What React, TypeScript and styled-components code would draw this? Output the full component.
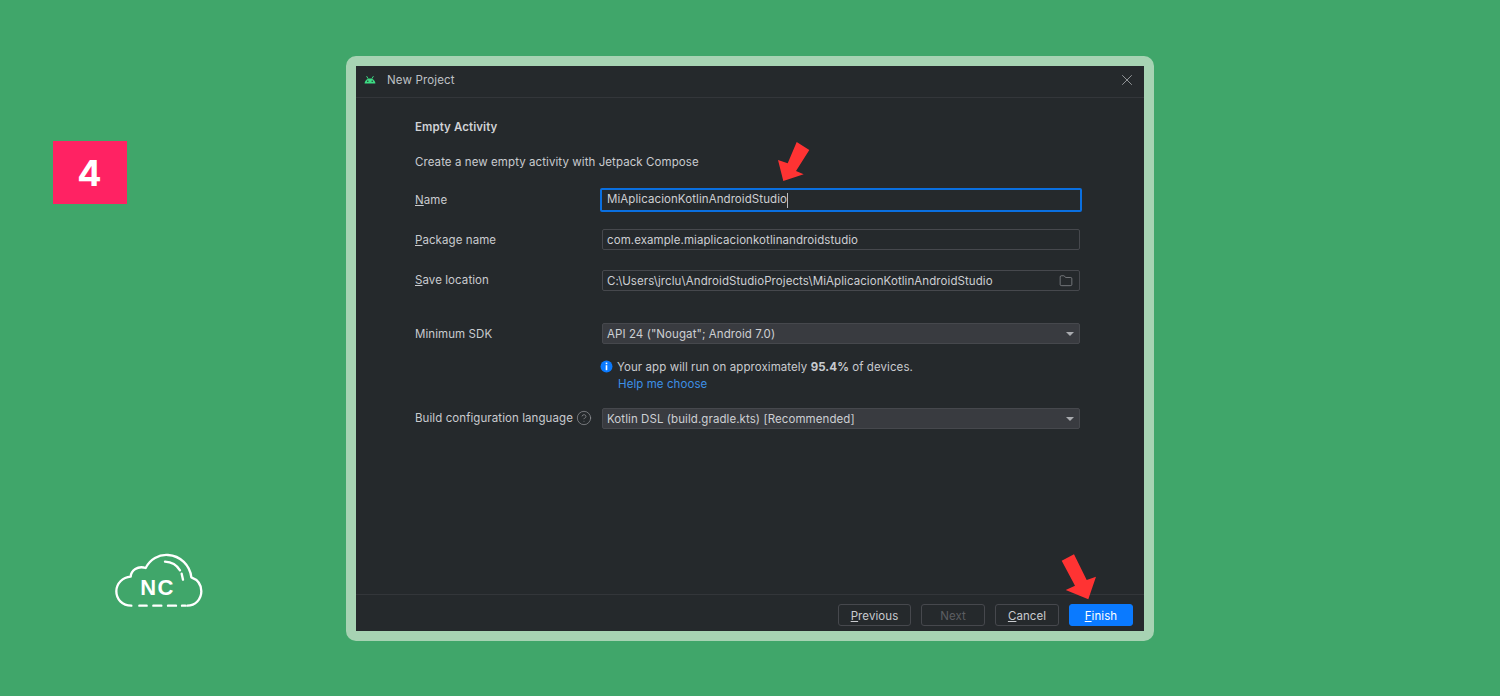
import React from 'react';
import styled, { createGlobalStyle } from 'styled-components';
import { CircleHelp, Folder, X } from 'lucide-react';

const GlobalStyle = createGlobalStyle`
  html, body {
    margin: 0;
    padding: 0;
    height: 100%;
    overflow: hidden;
  }
  body {
    background: #40a66a;
    font-family: Inter, "Liberation Sans", sans-serif;
  }
`;

const Page = styled.div`
  display: flex;
  width: 1500px;
  height: 696px;
  background: #40a66a;
`;

const Aside = styled.aside`
  display: flex;
  flex-direction: column;
  width: 346px;
  padding: 141px 0 0 53px;
  box-sizing: border-box;
`;

const StepBadge = styled.div`
  display: flex;
  align-items: center;
  justify-content: center;
  width: 74px;
  height: 63px;
  padding-right: 1px;
  box-sizing: border-box;
  background: #ff2263;
  color: #fff;
  font-family: Inter, "Liberation Sans", sans-serif;
  font-size: 36px;
  font-weight: 700;
`;

const LogoWrap = styled.div`
  margin: 336px 0 0 47px;
  width: 115px;
  height: 75px;
`;

const LogoText = styled.text`
  font-family: "Liberation Sans", sans-serif;
  font-size: 66px;
  font-weight: 700;
  letter-spacing: 4px;
  fill: #fff;
`;

const Frame = styled.div`
  position: relative;
  margin-top: 56px;
  width: 808px;
  height: 585px;
  box-sizing: border-box;
  border: 10px solid #a7d3b3;
  border-radius: 10px;
  background: #25292c;
  overflow: hidden;
`;

const Dialog = styled.div`
  display: flex;
  flex-direction: column;
  height: 100%;
`;

const TitleBar = styled.header`
  display: flex;
  align-items: center;
  box-sizing: border-box;
  height: 32px;
  padding: 0 8px 4px 8px;
  border-bottom: 1px solid #33363a;
  color: #bfc1c5;
  font-size: 11.5px;
  letter-spacing: 0.15px;
`;

const TitleText = styled.span`
  margin-left: 11px;
  flex: 1;
`;

const CloseButton = styled.span`
  display: flex;
  color: #a9abaf;
`;

const Body = styled.div`
  flex: 1;
  padding: 22px 63px 0 59px;
  color: #c9cbcf;
  font-size: 11.5px;
  letter-spacing: 0.08px;
`;

const Heading = styled.div`
  height: 15px;
  line-height: 15px;
  font-weight: 600;
  color: #d0d2d6;
`;

const Description = styled.div`
  height: 15px;
  line-height: 15px;
  margin: 20px 0 18px;
`;

const Row = styled.div<{ $gap: number }>`
  display: grid;
  grid-template-columns: 186px 480px;
  align-items: center;
  margin-top: ${p => p.$gap}px;
`;

const Label = styled.label<{ $lift?: boolean }>`
  display: flex;
  align-items: center;
  gap: 3px;
  white-space: nowrap;
  padding-bottom: ${p => (p.$lift ? 2 : 0)}px;
`;

const Field = styled.div<{ $focused?: boolean; $select?: boolean }>`
  display: flex;
  align-items: center;
  justify-content: space-between;
  box-sizing: border-box;
  height: ${p => (p.$focused ? 24 : 21)}px;
  margin: ${p => (p.$focused ? '0 -1px' : '0 1px')};
  padding: 0 ${p => (p.$select ? 5 : 6)}px 0 ${p => (p.$focused ? 5 : 4)}px;
  border: ${p => (p.$focused ? '2px solid #0a6fe0' : '1px solid #46484d')};
  border-radius: 2px;
  background: ${p => (p.$select ? '#393b40' : '#25292c')};
  color: #cdcfd3;
`;

const Caret = styled.span`
  display: inline-block;
  width: 1px;
  height: 15px;
  background: #b9bbbf;
  vertical-align: middle;
`;

const FieldValue = styled.span`
  white-space: nowrap;
`;

const DropArrow = styled.span`
  width: 0;
  height: 0;
  border-left: 4px solid transparent;
  border-right: 4px solid transparent;
  border-top: 4px solid #a9abaf;
`;

const Hint = styled.div`
  margin: 15px 0 0 185px;
  display: flex;
  flex-direction: column;
  gap: 3px;
`;

const HintLine = styled.div`
  display: flex;
  align-items: center;
  gap: 4px;
  height: 15px;
`;

const HelpLink = styled.a`
  margin-left: 18px;
  height: 15px;
  line-height: 15px;
  color: #3d8fe6;
`;

const Footer = styled.footer`
  display: flex;
  justify-content: flex-end;
  gap: 10px;
  height: 37px;
  padding: 9px 11px 0 0;
  box-sizing: border-box;
  border-top: 1px solid #33363a;
`;

const Button = styled.button<{ $variant?: 'primary' | 'disabled' }>`
  box-sizing: border-box;
  width: 64px;
  height: 22px;
  padding: 1px 0 0;
  border: 1px solid ${p => (p.$variant === 'primary' ? '#0a7aff' : '#46484d')};
  border-radius: 3px;
  background: ${p => (p.$variant === 'primary' ? '#0a7aff' : 'transparent')};
  color: ${p => (p.$variant === 'primary' ? '#fff' : p.$variant === 'disabled' ? '#5c5e62' : '#c9cbcf')};
  font-family: inherit;
  font-size: 11.5px;
  letter-spacing: 0.08px;
`;

const WideButton = styled(Button)`
  width: 73px;
`;

const ArrowMark = styled.svg`
  position: absolute;
  left: -10px;
  top: -10px;
  width: 808px;
  height: 585px;
  pointer-events: none;
`;

const AndroidIcon = () => (
  <svg width="12" height="10" viewBox="0 0 12 10" aria-hidden="true">
    <path d="M.6 8.6C.8 5.6 3 3.4 6 3.4s5.2 2.2 5.4 5.2z" fill="#3ddc84" />
    <path d="M2.6 1.2l1.6 2.6M9.4 1.2L7.8 3.8" stroke="#3ddc84" strokeWidth="1" />
    <circle cx="3.8" cy="6.2" r=".7" fill="#25292c" />
    <circle cx="8.2" cy="6.2" r=".7" fill="#25292c" />
  </svg>
);

const InfoIcon = () => (
  <svg width="13" height="13" viewBox="0 0 13 13" aria-hidden="true">
    <circle cx="6.5" cy="6.5" r="6" fill="#0a7aff" />
    <rect x="5.7" y="2.6" width="1.6" height="1.6" fill="#fff" />
    <rect x="5.7" y="5.2" width="1.6" height="5" fill="#fff" />
  </svg>
);

const CloudLogo = () => (
  <svg width="115" height="75" viewBox="0 0 345 225" aria-label="NC logo">
    <g fill="none" stroke="#fff" strokeWidth="7" strokeLinecap="round" strokeLinejoin="round">
      <path d="M94 197C66 197 49 177 49 154C49 130 68 112 92 110C93 92 113 76 137 84C150 58 176 43 204 45C241 47 270 76 274 112C293 119 304 135 304 154C304 178 286 197 262 197" />
      <path d="M118 197h22M160 197h24M204 197h24M246 197h10" />
      <path d="M195 65C215 66 231 76 240 91" />
      <path d="M245 101l4 18" />
    </g>
    <LogoText x="121" y="165">NC</LogoText>
  </svg>
);

const App = () => (
  <>
    <GlobalStyle />
    <Page>
      <Aside>
        <StepBadge>4</StepBadge>
        <LogoWrap>
          <CloudLogo />
        </LogoWrap>
      </Aside>
      <Frame>
        <Dialog>
          <TitleBar>
            <AndroidIcon />
            <TitleText>New Project</TitleText>
            <CloseButton>
              <X size={18} strokeWidth={1.1} />
            </CloseButton>
          </TitleBar>
          <Body>
            <Heading>Empty Activity</Heading>
            <Description>Create a new empty activity with Jetpack Compose</Description>
            <Row $gap={0}>
              <Label><span><u>N</u>ame</span></Label>
              <Field $focused>
                <FieldValue>MiAplicacionKotlinAndroidStudio<Caret /></FieldValue>
              </Field>
            </Row>
            <Row $gap={17}>
              <Label><span><u>P</u>ackage name</span></Label>
              <Field><FieldValue>com.example.miaplicacionkotlinandroidstudio</FieldValue></Field>
            </Row>
            <Row $gap={20}>
              <Label $lift><span><u>S</u>ave location</span></Label>
              <Field>
                <FieldValue>C:\Users\jrclu\AndroidStudioProjects\MiAplicacionKotlinAndroidStudio</FieldValue>
                <Folder size={14} strokeWidth={1} color="#a9abaf" />
              </Field>
            </Row>
            <Row $gap={32}>
              <Label>Minimum SDK</Label>
              <Field $select>
                <FieldValue>API 24 ("Nougat"; Android 7.0)</FieldValue>
                <DropArrow />
              </Field>
            </Row>
            <Hint>
              <HintLine>
                <InfoIcon />
                <span>Your app will run on approximately <b>95.4%</b> of devices.</span>
              </HintLine>
              <HelpLink>Help me choose</HelpLink>
            </Hint>
            <Row $gap={16}>
              <Label $lift>Build configuration language <CircleHelp size={16} strokeWidth={1} color="#9a9ca0" /></Label>
              <Field $select>
                <FieldValue>Kotlin DSL (build.gradle.kts) [Recommended]</FieldValue>
                <DropArrow />
              </Field>
            </Row>
          </Body>
          <Footer>
            <WideButton><u>P</u>revious</WideButton>
            <Button $variant="disabled">Next</Button>
            <Button><u>C</u>ancel</Button>
            <Button $variant="primary"><u>F</u>inish</Button>
          </Footer>
        </Dialog>
        <ArrowMark viewBox="346 56 808 585" aria-hidden="true">
          <polygon fill="#ff3333" points="796.7,142 809.3,150 796,171 803.7,174.3 783.3,181 778,160 787.7,163.3" />
          <polygon fill="#ff3333" points="1061.7,560.7 1074,554.3 1086.7,580 1096,576.7 1088.3,599.3 1065.7,590 1075,585.7" />
        </ArrowMark>
      </Frame>
    </Page>
  </>
);

export default App;
